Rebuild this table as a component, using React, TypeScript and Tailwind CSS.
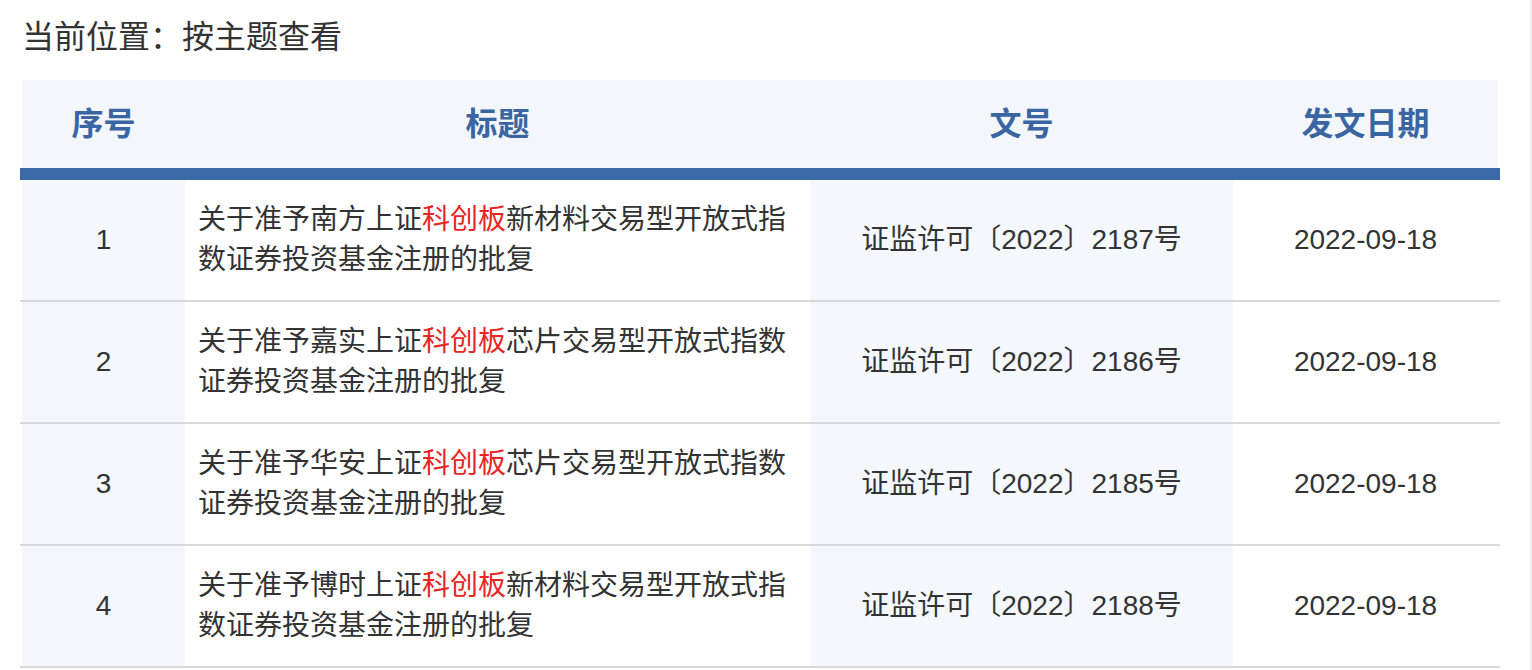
import React from 'react';

const rows = [
  { no: 1, pre: '关于准予南方上证', post: '新材料交易型开放式指数证券投资基金注册的批复', doc: '证监许可〔2022〕2187号', date: '2022-09-18' },
  { no: 2, pre: '关于准予嘉实上证', post: '芯片交易型开放式指数证券投资基金注册的批复', doc: '证监许可〔2022〕2186号', date: '2022-09-18' },
  { no: 3, pre: '关于准予华安上证', post: '芯片交易型开放式指数证券投资基金注册的批复', doc: '证监许可〔2022〕2185号', date: '2022-09-18' },
  { no: 4, pre: '关于准予博时上证', post: '新材料交易型开放式指数证券投资基金注册的批复', doc: '证监许可〔2022〕2188号', date: '2022-09-18' },
];

const font = { fontFamily: '"Liberation Sans", "Noto Sans CJK SC", sans-serif' };

const App: React.FC = () => {
  return (
    <div className="w-[1532px] min-h-[670px] bg-white border-r-2 border-[#f0f0f0]" style={font}>
      {/* Breadcrumb */}
      <div className="h-[80px] pl-[22px] pt-[21px] text-[32px] leading-[32px] text-[#333333]">
        当前位置：按主题查看
      </div>

      <div className="w-[1480px] ml-[20px]">
        {/* Header */}
        <div className="border-b-[12px] border-[#3b6aa8]">
          <div className="mx-[2px] grid grid-cols-[163px_625px_423px_265px] h-[88px] bg-[#f3f6fa] text-[32px] leading-[40px] font-bold text-[#3a65a3]">
            <div className="flex items-center justify-center">序号</div>
            <div className="flex items-center justify-center">标题</div>
            <div className="flex items-center justify-center">文号</div>
            <div className="flex items-center justify-center">发文日期</div>
          </div>
        </div>

        {/* Rows */}
        {rows.map((r) => (
          <div key={r.no} className="border-b-2 border-[#d9d9d9]">
            <div className="mx-[2px] grid grid-cols-[163px_625px_423px_265px] h-[120px] text-[28px] text-[#333333]">
              <div className="flex items-center justify-center bg-[#f4f7fb]">{r.no}</div>
              <div className="flex items-center px-[13px] leading-[40px] bg-white">
                <p>
                  {r.pre}
                  <span className="text-[#e8261f]">科创板</span>
                  {r.post}
                </p>
              </div>
              <div className="flex items-center justify-center bg-[#f4f7fb]">{r.doc}</div>
              <div className="flex items-center justify-center bg-white">{r.date}</div>
            </div>
          </div>
        ))}
      </div>
    </div>
  );
};

export default App;
